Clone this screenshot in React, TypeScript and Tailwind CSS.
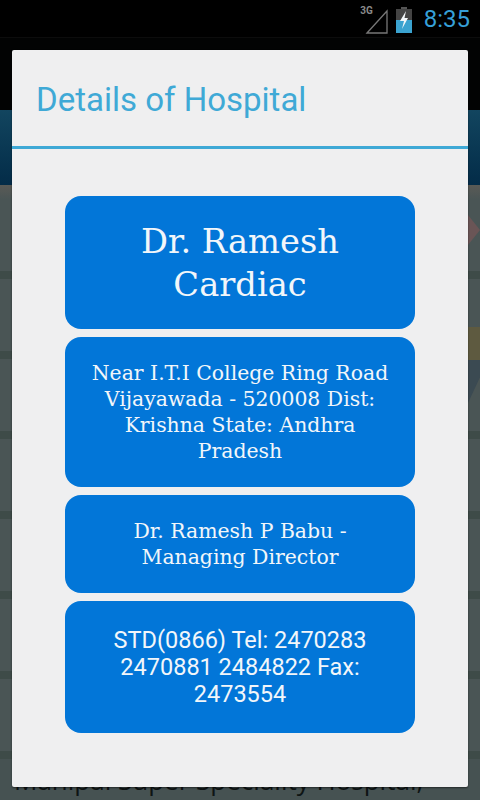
import React from "react";

const rows = [0, 1, 2, 3, 4, 5, 6];

function Card({ className, children }: { className: string; children: React.ReactNode }) {
  return (
    <div className={"w-[350px] rounded-[16px] bg-[#0276d8] text-[#f2f6fa] text-center flex items-center justify-center " + className}>
      {children}
    </div>
  );
}

export default function App() {
  return (
    <div className="relative w-[480px] h-[800px] overflow-hidden bg-[#465252] font-['Roboto',sans-serif]">
      {/* status bar */}
      <div className="h-[38px] bg-black flex items-center justify-end pr-[10px] border-b border-[#0c0c0c]">
        <span className="text-[10px] font-bold text-[#8a8a8a] self-start mt-[5px] leading-[12px]">3G</span>
        <svg width="24" height="26" viewBox="0 0 24 26" className="ml-[-8px] mt-[4px]">
          <path d="M2 25 L22 3 V25 Z" fill="none" stroke="#777" strokeWidth="1.3" />
        </svg>
        <svg width="16" height="26" viewBox="0 0 16 26" className="ml-[7px] mt-[2px]">
          <rect x="5" y="0" width="6" height="3" fill="#555" />
          <rect x="0" y="2" width="16" height="24" fill="#444" />
          <rect x="0" y="13" width="16" height="13" fill="#3ba3d0" />
          <path d="M10 4 L4 14 H8 L6 22 L12 11 H8.5 Z" fill="#f2f6f8" />
        </svg>
        <span className="ml-[12px] text-[24px] leading-none text-[#36a0d8] font-normal">8:35</span>
      </div>
      {/* dimmed page behind */}
      <div className="h-[72px] bg-[#020303]" />
      <div className="h-[75px] bg-gradient-to-b from-[#12455f] to-[#042c48]" />
      <div className="relative">
        <div className="h-[14px] bg-gradient-to-b from-[#5a5a56] to-[#4a5555]" />
        {rows.map((r) => (
          <div key={r} className="h-[80px] border-b-[8px] border-[#3e4b48] bg-[#4a5555]" />
        ))}
        <div className="absolute left-[468px] top-[30px] w-[12px] h-[30px] bg-[#6a5556] [clip-path:polygon(0_0,100%_50%,0_100%)]" />
        <div className="absolute left-[468px] top-[142px] w-[12px] h-[33px] bg-[#5e5a40]" />
        <div className="absolute left-[468px] top-[175px] w-[12px] h-[43px] bg-[#3b4a52] [clip-path:polygon(0_0,100%_0,100%_40%,0_100%)]" />
      </div>
      <div className="absolute left-[14px] top-[763px] text-[26px] leading-[34px] text-[#0e1414] whitespace-nowrap font-['Open_Sans',sans-serif]">
        Manipal Super Speciality Hospital,
      </div>
      {/* dialog */}
      <div className="absolute left-[12px] top-[50px] w-[456px] h-[737px] rounded-[2px] bg-[#efeff0] shadow-[0_1px_2px_rgba(0,0,0,0.5)]">
        <div className="h-[99px] border-b-[3px] border-[#3fa9d6] pl-[24px] pt-[29px]">
          <h1 className="text-[33px] leading-[42px] text-[#3fa9d6] font-normal">Details of Hospital</h1>
        </div>
        <div className="flex flex-col items-center gap-[8px] pt-[47px]">
          <Card className="h-[133px] font-['DejaVu_Serif',serif] text-[33.7px] leading-[43px] px-[40px]">
            Dr. Ramesh Cardiac
          </Card>
          <Card className="h-[150px] font-['DejaVu_Serif',serif] text-[20.4px] leading-[26px] px-[25px]">
            Near I.T.I College Ring Road Vijayawada - 520008 Dist: Krishna State: Andhra Pradesh
          </Card>
          <Card className="h-[98px] font-['DejaVu_Serif',serif] text-[20.4px] leading-[26px] px-[40px]">
            Dr. Ramesh P Babu - Managing Director
          </Card>
          <Card className="h-[132px] text-[23.5px] leading-[27px] px-[30px]">
            STD(0866) Tel: 2470283 2470881 2484822 Fax: 2473554
          </Card>
        </div>
      </div>
    </div>
  );
}
